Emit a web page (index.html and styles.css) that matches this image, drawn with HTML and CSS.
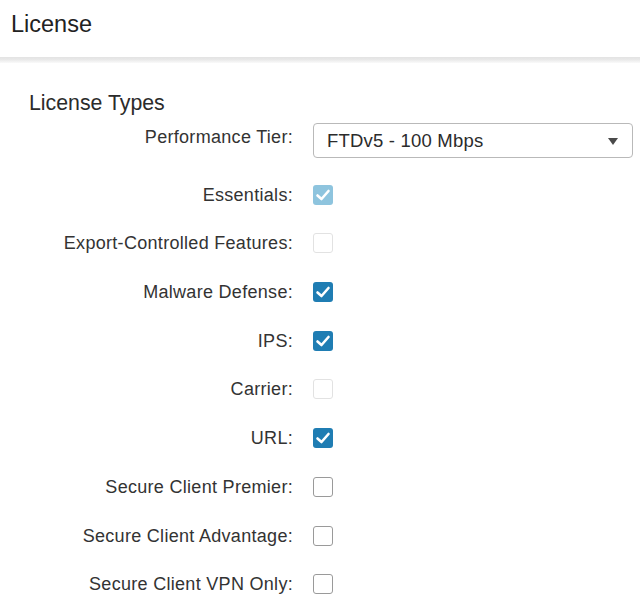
FILE: index.html
```html
<!DOCTYPE html>
<html>
<head>
<meta charset="utf-8">
<link rel="stylesheet" href="styles.css">
</head>
<body>
<header class="header">License</header>
<div class="divider"></div>
<section class="section">
  <h2 class="section-title">License Types</h2>
  <div class="form">
    <label class="label label-top">Performance Tier:</label>
    <div class="select">
      <span class="select-text">FTDv5 - 100 Mbps</span>
      <span class="caret"></span>
    </div>

    <label class="label">Essentials:</label>
    <span class="cb cb-checked cb-disabled"><svg viewBox="0 0 20 20"><polyline points="4.5,10.5 8.5,14 15.5,6" /></svg></span>

    <label class="label">Export-Controlled Features:</label>
    <span class="cb cb-disabled"></span>

    <label class="label">Malware Defense:</label>
    <span class="cb cb-checked"><svg viewBox="0 0 20 20"><polyline points="4.5,10.5 8.5,14 15.5,6" /></svg></span>

    <label class="label">IPS:</label>
    <span class="cb cb-checked"><svg viewBox="0 0 20 20"><polyline points="4.5,10.5 8.5,14 15.5,6" /></svg></span>

    <label class="label">Carrier:</label>
    <span class="cb cb-disabled"></span>

    <label class="label">URL:</label>
    <span class="cb cb-checked"><svg viewBox="0 0 20 20"><polyline points="4.5,10.5 8.5,14 15.5,6" /></svg></span>

    <label class="label">Secure Client Premier:</label>
    <span class="cb"></span>

    <label class="label">Secure Client Advantage:</label>
    <span class="cb"></span>

    <label class="label">Secure Client VPN Only:</label>
    <span class="cb"></span>
  </div>
</section>
</body>
</html>
```
FILE: styles.css
```css
* { box-sizing: border-box; }
html, body {
  margin: 0;
  padding: 0;
  background: #fff;
  font-family: "Liberation Sans", Arial, sans-serif;
  color: #2e2e2e;
}
.header {
  height: 57px;
  padding: 10px 0 0 11px;
  font-size: 23.5px;
  line-height: 28px;
  color: #222;
}
.divider {
  height: 6px;
  background: linear-gradient(#e3e3e3, #e8e8e8 40%, #fafafa);
}
.section {
  padding: 28px 7px 0 29px;
}
.section-title {
  margin: 0 0 8px 0;
  font-weight: normal;
  font-size: 21.3px;
  line-height: 24px;
  color: #2b2b2b;
}
.form {
  display: grid;
  grid-template-columns: 264px 1fr;
  column-gap: 20px;
  row-gap: 28.7px;
  align-items: center;
}
.label {
  text-align: right;
  font-size: 18px;
  letter-spacing: 0.3px;
  line-height: 20px;
  color: #333;
  white-space: nowrap;
}
.label-top {
  align-self: start;
  padding-top: 4px;
}
.select {
  height: 35px;
  border: 1px solid #b9b9b9;
  border-radius: 4px;
  display: flex;
  align-items: center;
  justify-content: space-between;
  padding: 0 14px 0 13px;
  margin-bottom: -2px;
}
.select-text {
  font-size: 18.5px;
  letter-spacing: 0.2px;
  color: #2b2b2b;
}
.caret {
  width: 0;
  height: 0;
  border-left: 5px solid transparent;
  border-right: 5px solid transparent;
  border-top: 7px solid #4a4a4a;
  margin-top: 2px;
}
.cb {
  width: 20px;
  height: 20px;
  border: 1px solid #9a9a9a;
  border-radius: 3px;
  background: #fff;
  display: block;
}
.cb svg {
  display: block;
  width: 20px;
  height: 20px;
}
.cb svg polyline {
  fill: none;
  stroke: #fff;
  stroke-width: 2.6;
  stroke-linecap: round;
  stroke-linejoin: round;
}
.cb-checked {
  background: #1f7db3;
  border: none;
}
.cb-disabled {
  border-color: #e2e2e2;
}
.cb-checked.cb-disabled {
  background: #8ec4de;
  border: none;
}
```
